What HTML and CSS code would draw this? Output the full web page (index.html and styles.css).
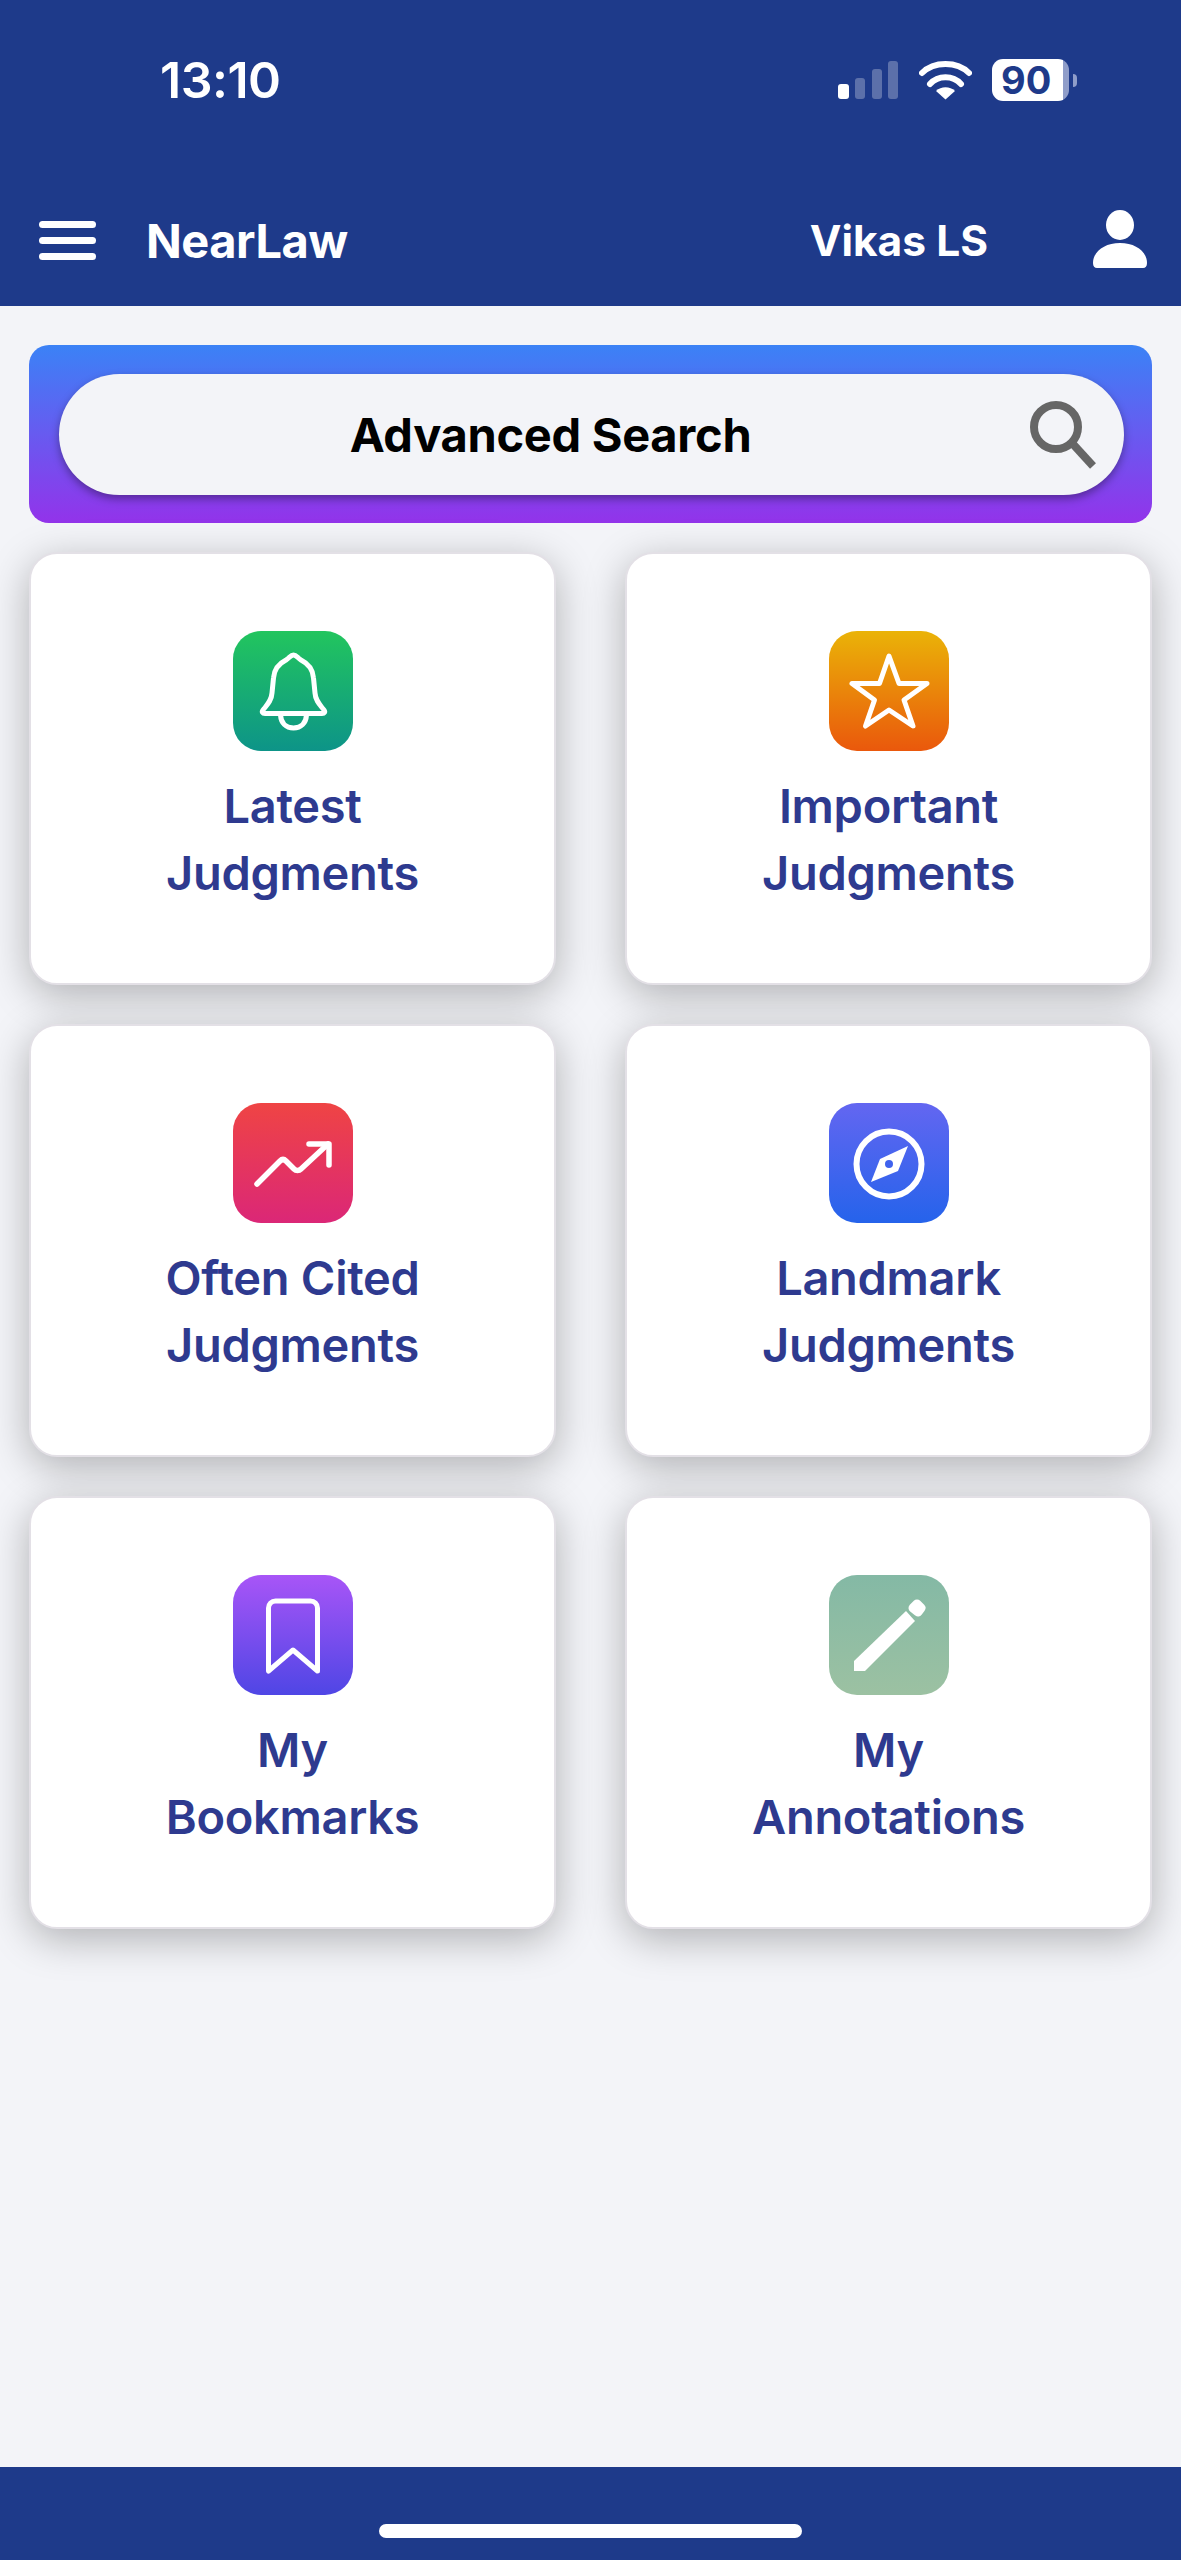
FILE: index.html
```html
<!DOCTYPE html>
<html lang="en">
<head>
  <meta charset="UTF-8">
  <meta name="viewport" content="width=device-width, initial-scale=1.0">
  <title>NearLaw</title>
  <link rel="stylesheet" href="styles.css">
</head>
<body>
  <div class="app">
    <header class="top">
      <div class="status-bar">
        <span class="time">13:10</span>
        <div class="status-icons">
          <svg class="signal" width="60" height="38" viewBox="0 0 60 38">
            <rect x="0" y="23" width="11" height="15" rx="3" fill="#fff"/>
            <rect x="17" y="17" width="10" height="21" rx="3" fill="#fff" opacity=".28"/>
            <rect x="34" y="8" width="10" height="30" rx="3" fill="#fff" opacity=".28"/>
            <rect x="50" y="0" width="10" height="38" rx="3" fill="#fff" opacity=".28"/>
          </svg>
          <svg class="wifi" width="53" height="40" viewBox="0 0 53 40">
            <path d="M3 13C15 1 38 1 50 13" fill="none" stroke="#fff" stroke-width="6" stroke-linecap="round"/>
            <path d="M11 24C19 15 34 15 42 24" fill="none" stroke="#fff" stroke-width="6" stroke-linecap="round"/>
            <path d="M17 31C22 26 31 26 36 31L26.500 39.500Z" fill="#fff"/>
          </svg>
          <div class="battery">
            <div class="battery-body"><span>90</span></div>
            <div class="battery-nub"></div>
          </div>
        </div>
      </div>
      <nav class="nav">
        <div class="burger"><span></span><span></span><span></span></div>
        <span class="brand">NearLaw</span>
        <span class="user-name">Vikas LS</span>
        <svg class="user-icon" width="54" height="58" viewBox="0 0 54 58">
          <ellipse cx="27" cy="15" rx="14" ry="15" fill="#fff"/>
          <path d="M0 53C0 42 11 33 27 33C43 33 54 42 54 53C54 56.500 52.500 58 50 58H4C1.500 58 0 56.500 0 53Z" fill="#fff"/>
        </svg>
      </nav>
    </header>

    <main class="content">
      <section class="search-panel">
        <div class="search-pill">
          <span class="search-label">Advanced Search</span>
          <svg class="search-icon" width="67" height="68" viewBox="0 0 67 68">
            <circle cx="26" cy="26" r="22" fill="none" stroke="#666" stroke-width="8"/>
            <path d="M42 42L63 65" fill="none" stroke="#666" stroke-width="8"/>
          </svg>
        </div>
      </section>

      <section class="tiles">
        <a class="tile">
          <div class="tile-icon green">
            <svg width="120" height="120" viewBox="0 0 120 120" fill="none" stroke="#fff" stroke-width="5" stroke-linejoin="round" stroke-linecap="round">
              <path d="M60.500 24C57.500 24 56.500 27 53 29C45 33 41 39 40.500 47L39 62C38.500 70 34 74 30 79C28.500 81 29.500 82.500 32 82.500H89C91.500 82.500 92.500 81 91 79C87 74 82.500 70 82 62L80.500 47C80 39 76 33 68 29C64.500 27 63.500 24 60.500 24Z"/>
              <path d="M47.500 84C48 92 53 97 60.500 97C68 97 73 92 73.500 84"/>
            </svg>
          </div>
          <span class="tile-label">Latest<br>Judgments</span>
        </a>
        <a class="tile">
          <div class="tile-icon orange">
            <svg width="120" height="120" viewBox="0 0 120 120" fill="none" stroke="#fff" stroke-width="5" stroke-linejoin="round">
              <path d="M60 25L70 52.500H98L75 69L84 95L60 79L36.500 95L45.500 69L23 52.500H50.500Z"/>
            </svg>
          </div>
          <span class="tile-label">Important<br>Judgments</span>
        </a>
        <a class="tile">
          <div class="tile-icon red">
            <svg width="120" height="120" viewBox="0 0 120 120" fill="none" stroke="#fff" stroke-width="5.500" stroke-linejoin="round" stroke-linecap="round">
              <path d="M24 81L47 58C49 56 51 56 53 58L61 66C63 68 66 68 68 66L95 41"/>
              <path d="M76 41H96V62"/>
            </svg>
          </div>
          <span class="tile-label">Often Cited<br>Judgments</span>
        </a>
        <a class="tile">
          <div class="tile-icon blue">
            <svg width="120" height="120" viewBox="0 0 120 120">
              <circle cx="60" cy="61" r="32.500" fill="none" stroke="#fff" stroke-width="6"/>
              <path d="M79 43L69 68L42 79L51 56Z" fill="#fff"/>
              <circle cx="60" cy="61" r="4" fill="#3f62ee"/>
            </svg>
          </div>
          <span class="tile-label">Landmark<br>Judgments</span>
        </a>
        <a class="tile">
          <div class="tile-icon purple">
            <svg width="120" height="120" viewBox="0 0 120 120" fill="none" stroke="#fff" stroke-width="5" stroke-linejoin="round">
              <path d="M35.500 96V33A7 7 0 0 1 42.500 26H77.500A7 7 0 0 1 84.500 33V96L60 75Z"/>
            </svg>
          </div>
          <span class="tile-label">My<br>Bookmarks</span>
        </a>
        <a class="tile">
          <div class="tile-icon sage">
            <svg width="120" height="120" viewBox="0 0 120 120" fill="#fff">
              <path d="M25 86L77 36L86 46L36 96H25Z"/>
              <path d="M84 33L88 29L92 33L89 37Z" stroke="#fff" stroke-width="9" stroke-linejoin="round"/>
            </svg>
          </div>
          <span class="tile-label">My<br>Annotations</span>
        </a>
      </section>
    </main>

    <footer class="bottom">
      <div class="home-bar"></div>
    </footer>
  </div>
</body>
</html>
```

FILE: styles.css
```css
* {
  box-sizing: border-box;
}

body {
  margin: 0;
  padding: 0;
  font-family: Inter, "Noto Sans", sans-serif;
  background-color: #f3f4f8;
}

.app {
  display: flex;
  flex-direction: column;
  height: 2560px;
}

/* Header */
.top {
  height: 306px;
  background: #1e3a8a;
  color: white;
}

.status-bar {
  display: flex;
  align-items: center;
  justify-content: space-between;
  height: 160px;
  padding: 0 104px 0 160px;
}

.time {
  font-size: 50px;
  font-weight: 600;
  letter-spacing: -0.5px;
}

.status-icons {
  display: flex;
  align-items: center;
}

.wifi {
  margin-left: 21px;
}

.battery {
  display: flex;
  align-items: center;
  margin-left: 20px;
}

.battery-body {
  display: flex;
  align-items: center;
  width: 77px;
  height: 42px;
  padding-left: 9px;
  border-radius: 11px;
  background: linear-gradient(to right, white 92%, #8f9dc9 92%);
  color: #1e3a8a;
  font-size: 38px;
  font-weight: 700;
}

.battery-nub {
  width: 4px;
  height: 13px;
  margin-left: 4px;
  border-radius: 0 4px 4px 0;
  background: #8f9dc9;
}

.nav {
  display: flex;
  align-items: center;
  height: 132px;
  margin-top: 14px;
  padding: 0 34px 0 39px;
}

.burger {
  display: flex;
  flex-direction: column;
  gap: 9px;
  width: 57px;
}

.burger span {
  height: 7px;
  border-radius: 4px;
  background: white;
}

.brand {
  margin-left: 50px;
  font-size: 47px;
  font-weight: 700;
  letter-spacing: -0.5px;
}

.user-name {
  margin-left: auto;
  font-size: 42.500px;
  font-weight: 700;
}

.user-icon {
  margin-left: 105px;
  margin-top: -3px;
}

/* Main */
.content {
  flex: 1;
  padding: 39px 29px 0;
}

.search-panel {
  height: 178px;
  padding: 29px 28px 28px 30px;
  border-radius: 20px;
  background: linear-gradient(to bottom, #3b82f6, #9333ea);
}

.search-pill {
  display: flex;
  align-items: center;
  height: 121px;
  padding: 0 27px 0 12px;
  border-radius: 61px;
  background: #f3f4f8;
  box-shadow: 0 4px 8px rgba(0, 0, 0, 0.35);
}

.search-label {
  flex: 1;
  text-align: center;
  color: black;
  font-size: 47px;
  font-weight: 700;
  letter-spacing: -0.3px;
}

.tiles {
  display: grid;
  grid-template-columns: 527px 527px;
  column-gap: 69px;
  row-gap: 39px;
  margin-top: 29px;
}

.tile {
  display: flex;
  flex-direction: column;
  align-items: center;
  height: 433px;
  padding-top: 77px;
  background: white;
  border: 2px solid #e3e0e6;
  border-radius: 28px;
  box-shadow: 0 10px 40px rgba(0, 0, 0, 0.28);
}

.tile-icon {
  width: 120px;
  height: 120px;
  border-radius: 28px;
}

.tile-icon svg {
  display: block;
}

.green { background: linear-gradient(to bottom, #22c55e, #0d9488); }
.orange { background: linear-gradient(to bottom, #eab308, #ea580c); }
.red { background: linear-gradient(to bottom, #ef4444, #db2777); }
.blue { background: linear-gradient(to bottom, #6366f1, #2563eb); }
.purple { background: linear-gradient(to bottom, #a855f7, #4f46e5); }
.sage { background: linear-gradient(to bottom, #84b9a5, #9cc1a2); }

.tile-label {
  margin-top: 21px;
  text-align: center;
  color: #2e3a8f;
  font-size: 47px;
  font-weight: 600;
  line-height: 67px;
  letter-spacing: -0.3px;
}

/* Footer */
.bottom {
  display: flex;
  justify-content: center;
  height: 93px;
  padding-top: 57px;
  background: #1e3a8a;
}

.home-bar {
  width: 423px;
  height: 14px;
  border-radius: 7px;
  background: white;
}
```
